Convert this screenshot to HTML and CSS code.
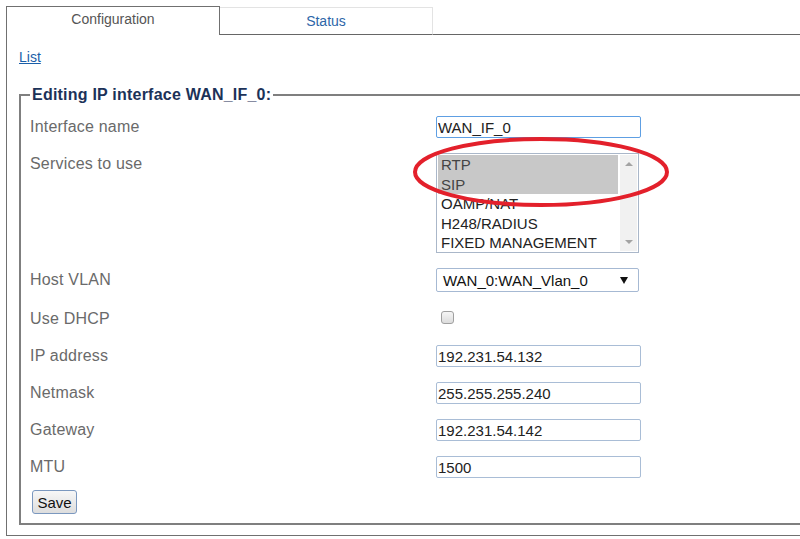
FILE: index.html
```html
<!DOCTYPE html>
<html lang="en">
<head>
<meta charset="utf-8">
<title>Editing IP interface</title>
<link rel="stylesheet" href="styles.css">
</head>
<body>
<div class="page">
  <div class="tabs">
    <div class="tab tab-active">Configuration</div>
    <div class="tab tab-inactive">Status</div>
    <div class="tab-fill"></div>
  </div>
  <div class="panel">
    <a class="list-link" href="#">List</a>
    <fieldset class="editor">
      <legend class="editor-title">Editing IP interface WAN_IF_0:</legend>
      <div class="form">
        <div class="label">Interface name</div>
        <div class="field"><input class="text-input text-input-focus" type="text" value="WAN_IF_0"></div>

        <div class="label">Services to use</div>
        <div class="field">
          <div class="listbox" role="listbox" aria-multiselectable="true">
            <div class="options">
              <div class="option option-selected" role="option">RTP</div>
              <div class="option option-selected" role="option">SIP</div>
              <div class="option" role="option">OAMP/NAT</div>
              <div class="option" role="option">H248/RADIUS</div>
              <div class="option" role="option">FIXED MANAGEMENT</div>
            </div>
            <div class="scrollbar">
              <span class="arrow-up"></span>
              <span class="arrow-down"></span>
            </div>
          </div>
        </div>

        <div class="label label-vlan">Host VLAN</div>
        <div class="field">
          <div class="select" role="combobox">
            <span class="select-value">WAN_0:WAN_Vlan_0</span>
            <span class="select-arrow"></span>
          </div>
        </div>

        <div class="label label-dhcp">Use DHCP</div>
        <div class="field field-check"><input class="checkbox" type="checkbox"></div>

        <div class="label">IP address</div>
        <div class="field"><input class="text-input" type="text" value="192.231.54.132"></div>

        <div class="label">Netmask</div>
        <div class="field"><input class="text-input" type="text" value="255.255.255.240"></div>

        <div class="label">Gateway</div>
        <div class="field"><input class="text-input" type="text" value="192.231.54.142"></div>

        <div class="label">MTU</div>
        <div class="field"><input class="text-input" type="text" value="1500"></div>
      </div>
      <button class="save-button" type="button">Save</button>
    </fieldset>
  </div>
</div>
<svg class="annotation" width="262" height="74" viewBox="0 0 262 74" aria-hidden="true">
  <ellipse cx="130" cy="37" rx="126" ry="33" fill="none" stroke="#e3202b" stroke-width="4"/>
</svg>
</body>
</html>
```

FILE: styles.css
```css
html, body {
  margin: 0;
  overflow: hidden;
}

body {
  font-family: "Liberation Sans", Arial, sans-serif;
  background: #ffffff;
}

.page {
  padding: 6px 0 0 6px;
  width: 900px;
}

.tabs {
  display: flex;
  align-items: flex-end;
}

.tab {
  box-sizing: border-box;
  text-align: center;
  font-size: 14px;
  line-height: 16px;
}

.tab-active {
  width: 214px;
  height: 29px;
  border: 1px solid #707070;
  border-bottom: none;
  padding-top: 4px;
  color: #555555;
}

.tab-inactive {
  width: 213px;
  height: 28px;
  border-top: 1px solid #e3e3e3;
  border-right: 1px solid #e3e3e3;
  border-bottom: 1px solid #666666;
  padding-top: 5px;
  color: #2d66a8;
}

.tab-fill {
  flex: 1;
  border-bottom: 1px solid #666666;
}

.panel {
  border-left: 1px solid #707070;
  border-bottom: 1px solid #707070;
  padding: 14px 0 10px 12px;
}

.list-link {
  display: block;
  width: max-content;
  font-size: 14px;
  line-height: 16px;
  color: #1a5ea8;
  text-decoration: underline;
}

.editor {
  margin: 21px 0 0;
  border: 2px solid #7f7f7f;
  padding: 12px 9px 9px;
}

.editor-title {
  padding: 0 2px;
  font-size: 16px;
  font-weight: bold;
  line-height: 18px;
  letter-spacing: 0.22px;
  color: #1c3258;
}

.form {
  display: grid;
  grid-template-columns: 406px 205px;
  row-gap: 15px;
  align-items: start;
}

.label {
  font-size: 16px;
  line-height: 18px;
  letter-spacing: 0.2px;
  color: #6a6a6a;
  padding-top: 2px;
}

.label-vlan {
  padding-top: 3px;
}

.label-dhcp {
  padding-top: 3px;
}

.field-check {
  height: 23px;
}

.text-input {
  box-sizing: border-box;
  display: block;
  width: 205px;
  height: 22px;
  margin: 0;
  border: 1px solid #a9bdd6;
  border-radius: 2px;
  padding: 0 1px;
  font-family: "Liberation Sans", Arial, sans-serif;
  font-size: 15px;
  color: #222222;
  background: #ffffff;
  outline: none;
}

.text-input-focus {
  border-color: #5e9fe3;
}

.listbox {
  box-sizing: border-box;
  width: 203px;
  height: 100px;
  border: 1px solid #aab7c9;
  padding: 1px;
  display: flex;
  overflow: hidden;
}

.options {
  width: 181px;
}

.option {
  font-size: 15px;
  line-height: 19.5px;
  padding-left: 3px;
  color: #222222;
  white-space: nowrap;
}

.option-selected {
  background: #c8c8c8;
  color: #444444;
}

.scrollbar {
  width: 17px;
  margin-left: 2px;
  background: #f1f1f1;
  display: flex;
  flex-direction: column;
  justify-content: space-between;
  align-items: center;
  padding: 7px 0;
  box-sizing: border-box;
}

.arrow-up {
  width: 0;
  height: 0;
  border-left: 4px solid transparent;
  border-right: 4px solid transparent;
  border-bottom: 4px solid #a3a3a3;
}

.arrow-down {
  width: 0;
  height: 0;
  border-left: 4px solid transparent;
  border-right: 4px solid transparent;
  border-top: 4px solid #a3a3a3;
}

.select {
  box-sizing: border-box;
  width: 203px;
  height: 24px;
  border: 1px solid #a6b9d3;
  border-radius: 2px;
  display: flex;
  align-items: center;
  justify-content: space-between;
  padding: 0 10px 0 6px;
  font-size: 15px;
  color: #111111;
}

.select-arrow {
  width: 0;
  height: 0;
  border-left: 4px solid transparent;
  border-right: 4px solid transparent;
  border-top: 7px solid #111111;
}

.checkbox {
  appearance: none;
  -webkit-appearance: none;
  box-sizing: border-box;
  display: block;
  width: 13px;
  height: 13px;
  margin: 4px 0 0 5px;
  border: 1px solid #a0a0a0;
  border-radius: 3px;
  background: linear-gradient(#f6f6f6, #dcdcdc);
}

.save-button {
  display: block;
  box-sizing: border-box;
  width: 45px;
  height: 24px;
  margin: 12px 0 0 2px;
  padding: 0;
  border: 1px solid #7b98bf;
  border-radius: 3px;
  background: linear-gradient(#f7f7f7, #dddddd);
  font-family: "Liberation Sans", Arial, sans-serif;
  font-size: 15px;
  color: #111111;
}

.annotation {
  position: absolute;
  left: 411px;
  top: 135px;
}
```
